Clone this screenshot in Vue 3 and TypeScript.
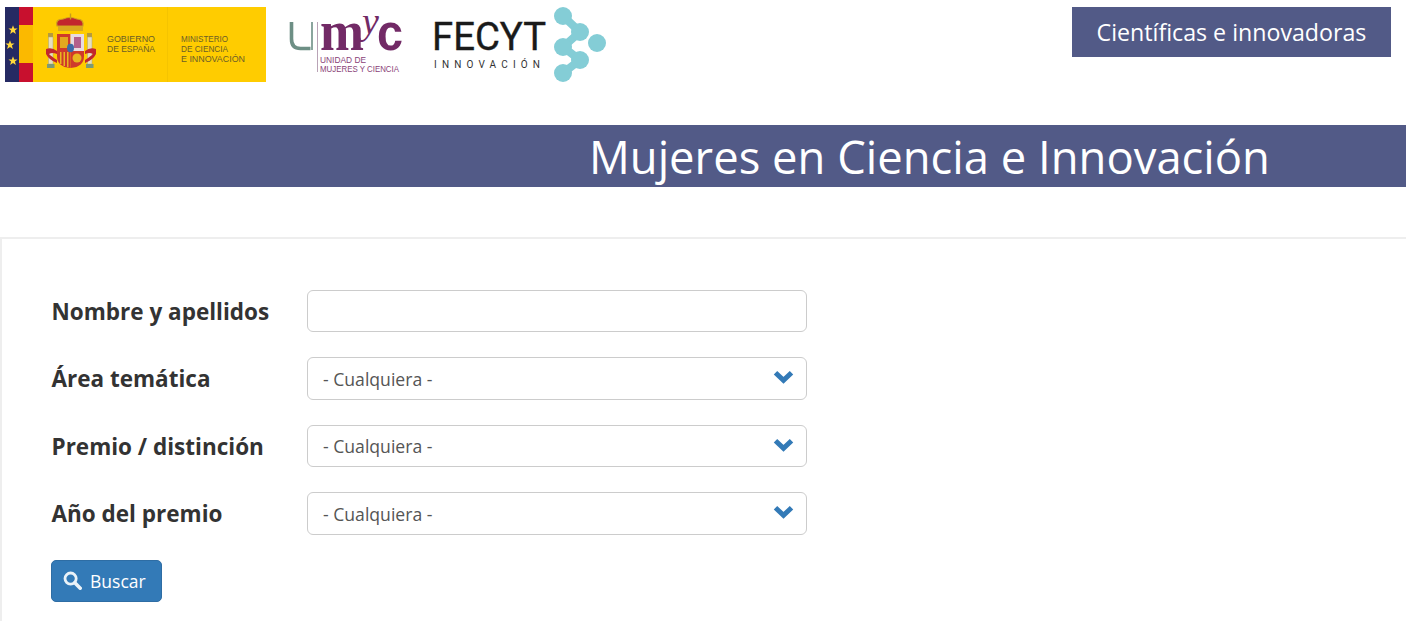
<script setup lang="ts">
const selects: { label: string; value: string }[] = [
  { label: 'Área temática', value: '- Cualquiera -' },
  { label: 'Premio / distinción', value: '- Cualquiera -' },
  { label: 'Año del premio', value: '- Cualquiera -' },
]
const starPoints = '0,-4.8 1.2,-1.5 4.6,-1.5 1.9,0.6 2.9,3.9 0,1.9 -2.9,3.9 -1.9,0.6 -4.6,-1.5 -1.2,-1.5'
</script>

<template>
  <div class="page">
    <header class="top">
      <div class="logos">
        <svg class="logo-gov" width="261" height="75" viewBox="0 0 261 75">
          <rect width="261" height="75" fill="#ffcc00" />
          <rect width="14" height="75" fill="#252a63" />
          <rect x="14" width="14" height="75" fill="#c8102e" />
          <rect x="14" y="18" width="14" height="38" fill="#fbb900" />
          <polygon :points="starPoints" transform="translate(8 23)" fill="#ffd83a" />
          <polygon :points="starPoints" transform="translate(5 38)" fill="#ffd83a" />
          <polygon :points="starPoints" transform="translate(8 54)" fill="#ffd83a" />
          <rect x="162" width="1" height="75" fill="#f5c400" />
          <!-- columns -->
          <rect x="43" y="26" width="5" height="4" fill="#b59a3c" />
          <rect x="82" y="26" width="5" height="4" fill="#b59a3c" />
          <rect x="43.5" y="30" width="4.5" height="27" fill="#e6dfc0" stroke="#a8a27a" stroke-width="0.5" />
          <rect x="82.5" y="30" width="4.5" height="27" fill="#e6dfc0" stroke="#a8a27a" stroke-width="0.5" />
          <rect x="42" y="57" width="7.5" height="4" fill="#7d9a75" />
          <rect x="81" y="57" width="7.5" height="4" fill="#7d9a75" />
          <path d="M41 42q6-2 11 2v3q-5-2-8 0 2 2 8 6v3q-8-3-11-9z" fill="#c2272d" />
          <path d="M91 42q-6-2-11 2v3q5-2 8 0-2 2-8 6v3q8-3 11-9z" fill="#c2272d" />
          <!-- crown -->
          <path d="M52 19q-2-7 6-7 7-3 14 0 7 0 6 7z" fill="#c2272d" stroke="#d0a020" stroke-width="1.2" />
          <rect x="53" y="19" width="25" height="5" fill="#d9a91f" />
          <path d="M64.8 6.500h1.400v6h-1.400z" fill="#c89a1c" />
          <!-- shield -->
          <path d="M52 27h13.500v34q-13.500-1-13.500-12z" fill="#cf3a2b" />
          <path d="M65.500 27h13.500v17h-13.500z" fill="#e7dbe0" />
          <path d="M65.500 44h13.500v5q0 11-13.500 12z" fill="#cf3a2b" />
          <path d="M55 30h8v11h-8z" fill="#e3a81f" />
          <path d="M69 30h7v11h-7z" fill="#b3608b" />
          <path d="M55 45h1.500v12h-1.500zM58.500 45h1.500v14h-1.500zM62 45h1.500v15h-1.500z" fill="#e8b620" />
          <circle cx="72" cy="51" r="4.500" fill="#e8b620" />
          <ellipse cx="65.500" cy="41" rx="3.500" ry="4.200" fill="#3c6aa8" />
          <text x="102" y="35" class="gov" textLength="48" lengthAdjust="spacingAndGlyphs">GOBIERNO</text>
          <text x="102" y="45" class="gov" textLength="48" lengthAdjust="spacingAndGlyphs">DE ESPAÑA</text>
          <text x="176" y="35" class="gov" textLength="47" lengthAdjust="spacingAndGlyphs">MINISTERIO</text>
          <text x="176" y="45" class="gov" textLength="47" lengthAdjust="spacingAndGlyphs">DE CIENCIA</text>
          <text x="176" y="55" class="gov" textLength="64" lengthAdjust="spacingAndGlyphs">E INNOVACIÓN</text>
        </svg>
        <svg class="logo-umyc" width="116" height="75" viewBox="0 -12 116 75">
          <path d="M3.500 3v17q0 9.500 9 9.500h10" fill="none" stroke="#6d8f85" stroke-width="3.600" />
          <path d="M24 3v28" fill="none" stroke="#6d8f85" stroke-width="1.600" />
          <rect x="29" y="3" width="1" height="50" fill="#b9a3b6" />
          <text x="32" y="31" class="umyc-m" textLength="44" lengthAdjust="spacingAndGlyphs">m</text>
          <text x="74" y="15" class="umyc-y">y</text>
          <text x="89" y="31" class="umyc-c" textLength="26" lengthAdjust="spacingAndGlyphs">c</text>
          <text x="32" y="44" class="umyc-s" textLength="46" lengthAdjust="spacingAndGlyphs">UNIDAD DE</text>
          <text x="32" y="53" class="umyc-s" textLength="79" lengthAdjust="spacingAndGlyphs">MUJERES Y CIENCIA</text>
        </svg>
        <svg class="logo-fecyt" width="176" height="76" viewBox="0 0 176 76">
          <text x="0" y="43" class="fecyt" textLength="114" lengthAdjust="spacingAndGlyphs">FECYT</text>
          <text x="2" y="61" class="inno" textLength="106">INNOVACIÓN</text>
          <path d="M131 9L148 25 131 40 148 53 131 66" fill="none" stroke="#84cdd6" stroke-width="8" />
          <circle cx="131" cy="9" r="9" fill="#84cdd6" />
          <circle cx="148" cy="25" r="9" fill="#84cdd6" />
          <circle cx="131" cy="40" r="9" fill="#84cdd6" />
          <circle cx="165" cy="36" r="9" fill="#84cdd6" />
          <circle cx="148" cy="53" r="9" fill="#84cdd6" />
          <circle cx="131" cy="66" r="9" fill="#84cdd6" />
        </svg>
      </div>
      <a class="tag" href="#">Científicas e innovadoras</a>
    </header>

    <div class="band"><h1>Mujeres en Ciencia e Innovación</h1></div>

    <form class="panel" @submit.prevent>
      <div class="row">
        <label for="f-name">Nombre y apellidos</label>
        <input id="f-name" class="control" type="text" />
      </div>
      <div v-for="s in selects" :key="s.label" class="row">
        <label>{{ s.label }}</label>
        <div class="control select">
          <span>{{ s.value }}</span>
          <svg class="chev" width="21" height="14" viewBox="0 0 21 14">
            <path d="M2.500 2.800l8 7.600 8-7.600" fill="none" stroke="#337ab7" stroke-width="5" />
          </svg>
        </div>
      </div>
      <button class="search" type="submit">
        <svg width="19" height="19" viewBox="0 0 19 19">
          <circle cx="7.600" cy="7.600" r="5.600" fill="none" stroke="#eaf2f8" stroke-width="2.800" />
          <path d="M11.800 11.800l5.400 5.400" stroke="#eaf2f8" stroke-width="3.600" stroke-linecap="round" />
        </svg>
        <span>Buscar</span>
      </button>
    </form>
  </div>
</template>

<style>
html, body { margin: 0; background: #fff; overflow: hidden; }
</style>

<style scoped>
.page {
  width: 1406px;
  height: 621px;
  overflow: hidden;
  font-family: "Open Sans", "Noto Sans", sans-serif;
  color: #333;
}
.top {
  height: 125px;
  display: flex;
  justify-content: space-between;
  align-items: flex-start;
  padding: 7px 15px 0 5px;
  box-sizing: border-box;
}
.logos { display: flex; align-items: flex-start; }
.logo-gov { display: block; }
.logo-umyc { display: block; margin: 0 0 0 22px; overflow: visible; }
.logo-fecyt { display: block; margin: 0 0 0 28px; overflow: visible; }
.gov { font: 9.5px "Liberation Sans", sans-serif; fill: #6b5e28; }
.umyc-m { font: 700 56px "Liberation Serif", serif; fill: #722a66; }
.umyc-y { font: italic 38px "Liberation Serif", serif; fill: #722a66; }
.umyc-c { font: 700 52px "Liberation Sans", sans-serif; fill: #722a66; }
.umyc-s { font: 9.5px "Liberation Sans", sans-serif; fill: #8a3f78; }
.fecyt { font: 400 39px Roboto, sans-serif; fill: #1a1a1a; stroke: #1a1a1a; stroke-width: 0.4px; }
.inno { font: 10px Roboto, sans-serif; fill: #333; }
.tag {
  width: 319px;
  height: 50px;
  background: #525a87;
  color: #fff;
  font-size: 23.2px;
  display: flex;
  align-items: center;
  justify-content: center;
  text-decoration: none;
}
.band {
  height: 62px;
  background: #525a87;
  display: flex;
  align-items: center;
  padding-left: 589px;
}
.band h1 {
  margin: 0;
  font-size: 45.4px;
  font-weight: 400;
  color: #fff;
  white-space: nowrap;
  line-height: 64px;
}
.panel {
  margin-top: 50px;
  height: 400px;
  border-top: 2px solid #eee;
  border-left: 2px solid #eee;
  padding: 50.9px 0 0 49px;
  box-sizing: border-box;
  display: flex;
  flex-direction: column;
  align-items: flex-start;
}
.row {
  display: flex;
  align-items: center;
  height: 42.5px;
  margin-bottom: 25px;
}
.row label {
  width: 255.5px;
  padding-left: 0.5px;
  font-size: 22.5px;
  font-weight: 700;
  color: #333;
}
.control {
  width: 500px;
  height: 100%;
  box-sizing: border-box;
  border: 1px solid #ccc;
  border-radius: 6px;
  background: #fff;
  font: 17.6px "Open Sans", sans-serif;
  color: #555;
}
.select {
  display: flex;
  align-items: center;
  justify-content: space-between;
  padding: 0 12px 0 15px;
}
.chev { margin-top: -3px; }
.search {
  width: 111px;
  height: 42px;
  border: 1px solid #2e6da4;
  border-radius: 5px;
  background: #337ab7;
  color: #fff;
  font: 17.5px "Open Sans", sans-serif;
  display: flex;
  align-items: center;
  justify-content: flex-start;
  gap: 8px;
  padding: 0 0 0 11px;
}
</style>
